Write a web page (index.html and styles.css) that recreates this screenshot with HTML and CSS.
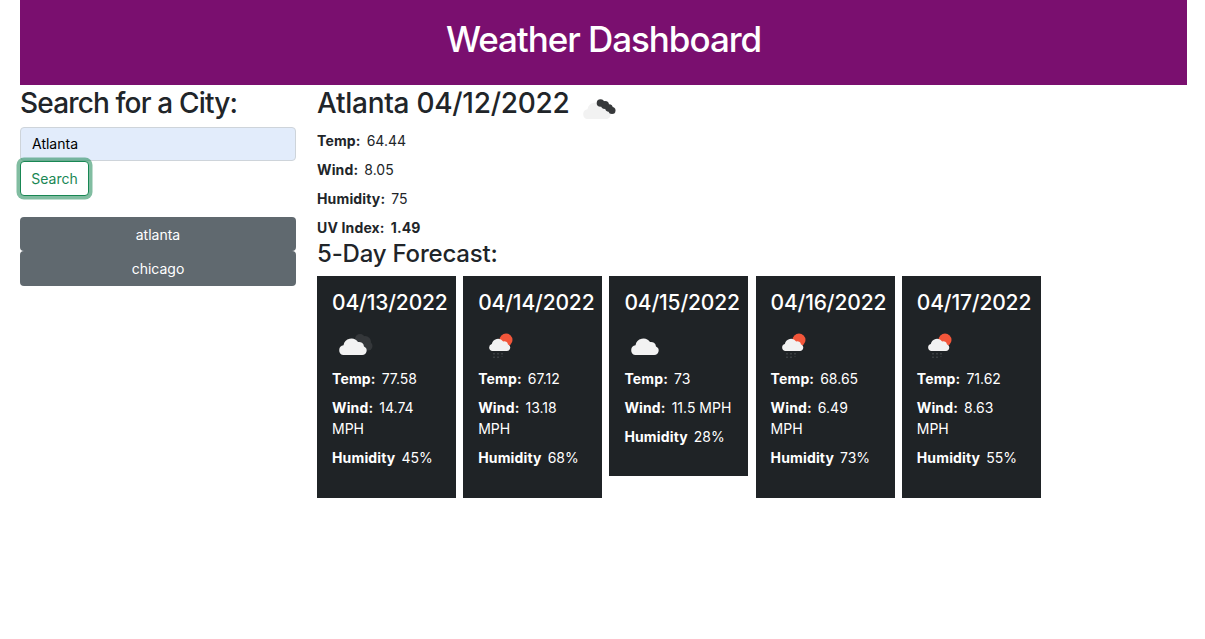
FILE: index.html
```html
<!DOCTYPE html>
<html lang="en">
<head>
    <meta charset="UTF-8">
    <meta name="viewport" content="width=device-width, initial-scale=1.0">
    <title>Weather Dashboard</title>
    <link rel="stylesheet" href="styles.css">
</head>
<body>
    <div class="container">
        <header class="banner">
            <h1>Weather Dashboard</h1>
        </header>
        <div class="layout">
            <aside class="sidebar">
                <h3>Search for a City:</h3>
                <input type="text" class="city-input" value="Atlanta">
                <button class="search-btn">Search</button>
                <div class="history">
                    <button class="history-btn">atlanta</button>
                    <button class="history-btn">chicago</button>
                </div>
            </aside>
            <main class="main">
                <h2 class="city-title">
                    Atlanta 04/12/2022
                    <svg class="today-icon" viewBox="0 0 50 34">
                        <path fill="#f2f2f2" d="M11 32h19a4.500 4.500 0 0 0 2-8.600 5 5 0 0 0-6-4.400 8 8 0 0 0-14.500 3.200A5 5 0 0 0 11 32z"/>
                        <g fill="#37393b">
                            <circle cx="24.500" cy="16" r="3.800"/>
                            <circle cx="29" cy="18" r="4"/>
                            <circle cx="33" cy="21" r="3.800"/>
                            <circle cx="36" cy="23.500" r="3.500"/>
                        </g>
                    </svg>
                </h2>
                <p><strong>Temp:</strong>64.44</p>
                <p><strong>Wind:</strong>8.05</p>
                <p><strong>Humidity:</strong>75</p>
                <p class="uv"><strong>UV Index:</strong><strong>1.49</strong></p>
                <h4>5-Day Forecast:</h4>
                <div class="forecast">
                    <div class="card">
                        <h5>04/13/2022</h5>
                        <svg class="icon" viewBox="0 0 50 45">
                            <g fill="#34373a">
                                <circle cx="28" cy="16" r="5"/>
                                <circle cx="33" cy="19" r="6"/>
                                <circle cx="36" cy="23" r="4.500"/>
                            </g>
                            <path fill="#f2f2f2" d="M11 32h19a4.500 4.500 0 0 0 2-8.600 5 5 0 0 0-6-4.400 8 8 0 0 0-14.500 3.200A5 5 0 0 0 11 32z"/>
                        </svg>
                        <p><strong>Temp:</strong>77.58</p>
                        <p><strong>Wind:</strong>14.74 MPH</p>
                        <p><strong>Humidity</strong>45%</p>
                    </div>
                    <div class="card">
                        <h5>04/14/2022</h5>
                        <svg class="icon" viewBox="0 0 50 45">
                            <circle cx="28" cy="17" r="6.500" fill="#f2563a"/>
                            <path fill="#f2f2f2" d="M14 28h15a3.400 3.400 0 0 0 1-6.600 3.800 3.800 0 0 0-4.800-3 6.400 6.400 0 0 0-11.400 2.600A3.600 3.600 0 0 0 14 28z"/>
                            <path stroke="#55585b" stroke-width="1" stroke-dasharray="1.500 2" d="M16 30v6M20 30v6M24 30v4"/>
                        </svg>
                        <p><strong>Temp:</strong>67.12</p>
                        <p><strong>Wind:</strong>13.18 MPH</p>
                        <p><strong>Humidity</strong>68%</p>
                    </div>
                    <div class="card">
                        <h5>04/15/2022</h5>
                        <svg class="icon" viewBox="0 0 50 45">
                            <path fill="#f2f2f2" d="M11 32h19a4.500 4.500 0 0 0 2-8.600 5 5 0 0 0-6-4.400 8 8 0 0 0-14.500 3.200A5 5 0 0 0 11 32z"/>
                        </svg>
                        <p><strong>Temp:</strong>73</p>
                        <p><strong>Wind:</strong>11.5 MPH</p>
                        <p><strong>Humidity</strong>28%</p>
                    </div>
                    <div class="card">
                        <h5>04/16/2022</h5>
                        <svg class="icon" viewBox="0 0 50 45">
                            <circle cx="28" cy="17" r="6.500" fill="#f2563a"/>
                            <path fill="#f2f2f2" d="M14 28h15a3.400 3.400 0 0 0 1-6.600 3.800 3.800 0 0 0-4.800-3 6.400 6.400 0 0 0-11.400 2.600A3.600 3.600 0 0 0 14 28z"/>
                            <path stroke="#55585b" stroke-width="1" stroke-dasharray="1.500 2" d="M16 30v6M20 30v6M24 30v4"/>
                        </svg>
                        <p><strong>Temp:</strong>68.65</p>
                        <p><strong>Wind:</strong>6.49 MPH</p>
                        <p><strong>Humidity</strong>73%</p>
                    </div>
                    <div class="card">
                        <h5>04/17/2022</h5>
                        <svg class="icon" viewBox="0 0 50 45">
                            <circle cx="28" cy="17" r="6.500" fill="#f2563a"/>
                            <path fill="#f2f2f2" d="M14 28h15a3.400 3.400 0 0 0 1-6.600 3.800 3.800 0 0 0-4.800-3 6.400 6.400 0 0 0-11.400 2.600A3.600 3.600 0 0 0 14 28z"/>
                            <path stroke="#55585b" stroke-width="1" stroke-dasharray="1.500 2" d="M16 30v6M20 30v6M24 30v4"/>
                        </svg>
                        <p><strong>Temp:</strong>71.62</p>
                        <p><strong>Wind:</strong>8.63 MPH</p>
                        <p><strong>Humidity</strong>55%</p>
                    </div>
                </div>
            </main>
        </div>
    </div>
</body>
</html>
```

FILE: styles.css
```css
body { font-family: Inter, "Liberation Sans", sans-serif; background: #fff; color: #212529; margin: 0; font-size: 14px; line-height: 1.5; }
.container { margin: 0 18px 0 20px; }
.banner { background: #7a0f6f; color: #fff; height: 85px; box-sizing: border-box; padding-bottom: 8px; display: flex; align-items: center; justify-content: center; }
.banner h1 { margin: 0; font-size: 35px; font-weight: 550; line-height: 1.2; letter-spacing: -0.03em; }
.layout { display: flex; gap: 21px; }
.sidebar { width: 276px; flex: none; }
.main { flex: 1; }
h2, h3 { margin: 0 0 6px; padding-top: 2px; font-size: 28px; font-weight: 500; line-height: 1.2; letter-spacing: -0.03em; }
h4 { margin: 2px 0 7px; font-size: 24px; font-weight: 500; line-height: 1.2; letter-spacing: -0.2px; }
h5 { margin: 0 0 8px; font-size: 21px; font-weight: 500; line-height: 1.2; letter-spacing: -0.15px; }
p { margin: 0 0 8px; }
strong { margin-right: 6px; font-weight: 700; letter-spacing: 0.15px; }
.city-input { display: block; width: 100%; height: 34px; box-sizing: border-box; padding: 0 11px; border: 1px solid #ced4da; border-radius: 4px; background: #e2ecfb; color: #000; font: 14px Inter, sans-serif; }
.search-btn { display: block; height: 35px; width: 69px; padding: 0; background: #fff; color: #198754; border: 1px solid #198754; border-radius: 4px; box-shadow: 0 0 0 3.5px rgba(25,135,84,0.55); font: 14px Inter, sans-serif; }
.history { margin-top: 21.300px; }
.history-btn { display: block; width: 100%; height: 34.500px; padding: 0; background: #60696f; color: #fff; border: none; border-radius: 4px; font: 14px Inter, sans-serif; }
.city-title { display: flex; gap: 7px; margin-bottom: 9px; letter-spacing: -0.01em; }
.today-icon { width: 50px; height: 34px; flex: none; }
.uv { margin: 0; }
.forecast { display: flex; gap: 7.200px; align-items: flex-start; }
.card { width: 139px; box-sizing: border-box; padding: 14px 15px 21.300px; background: #1f2326; color: #fff; }
.card p { line-height: 21.500px; margin-bottom: 7.500px; }
.icon { display: block; width: 50px; height: 45px; }
```
